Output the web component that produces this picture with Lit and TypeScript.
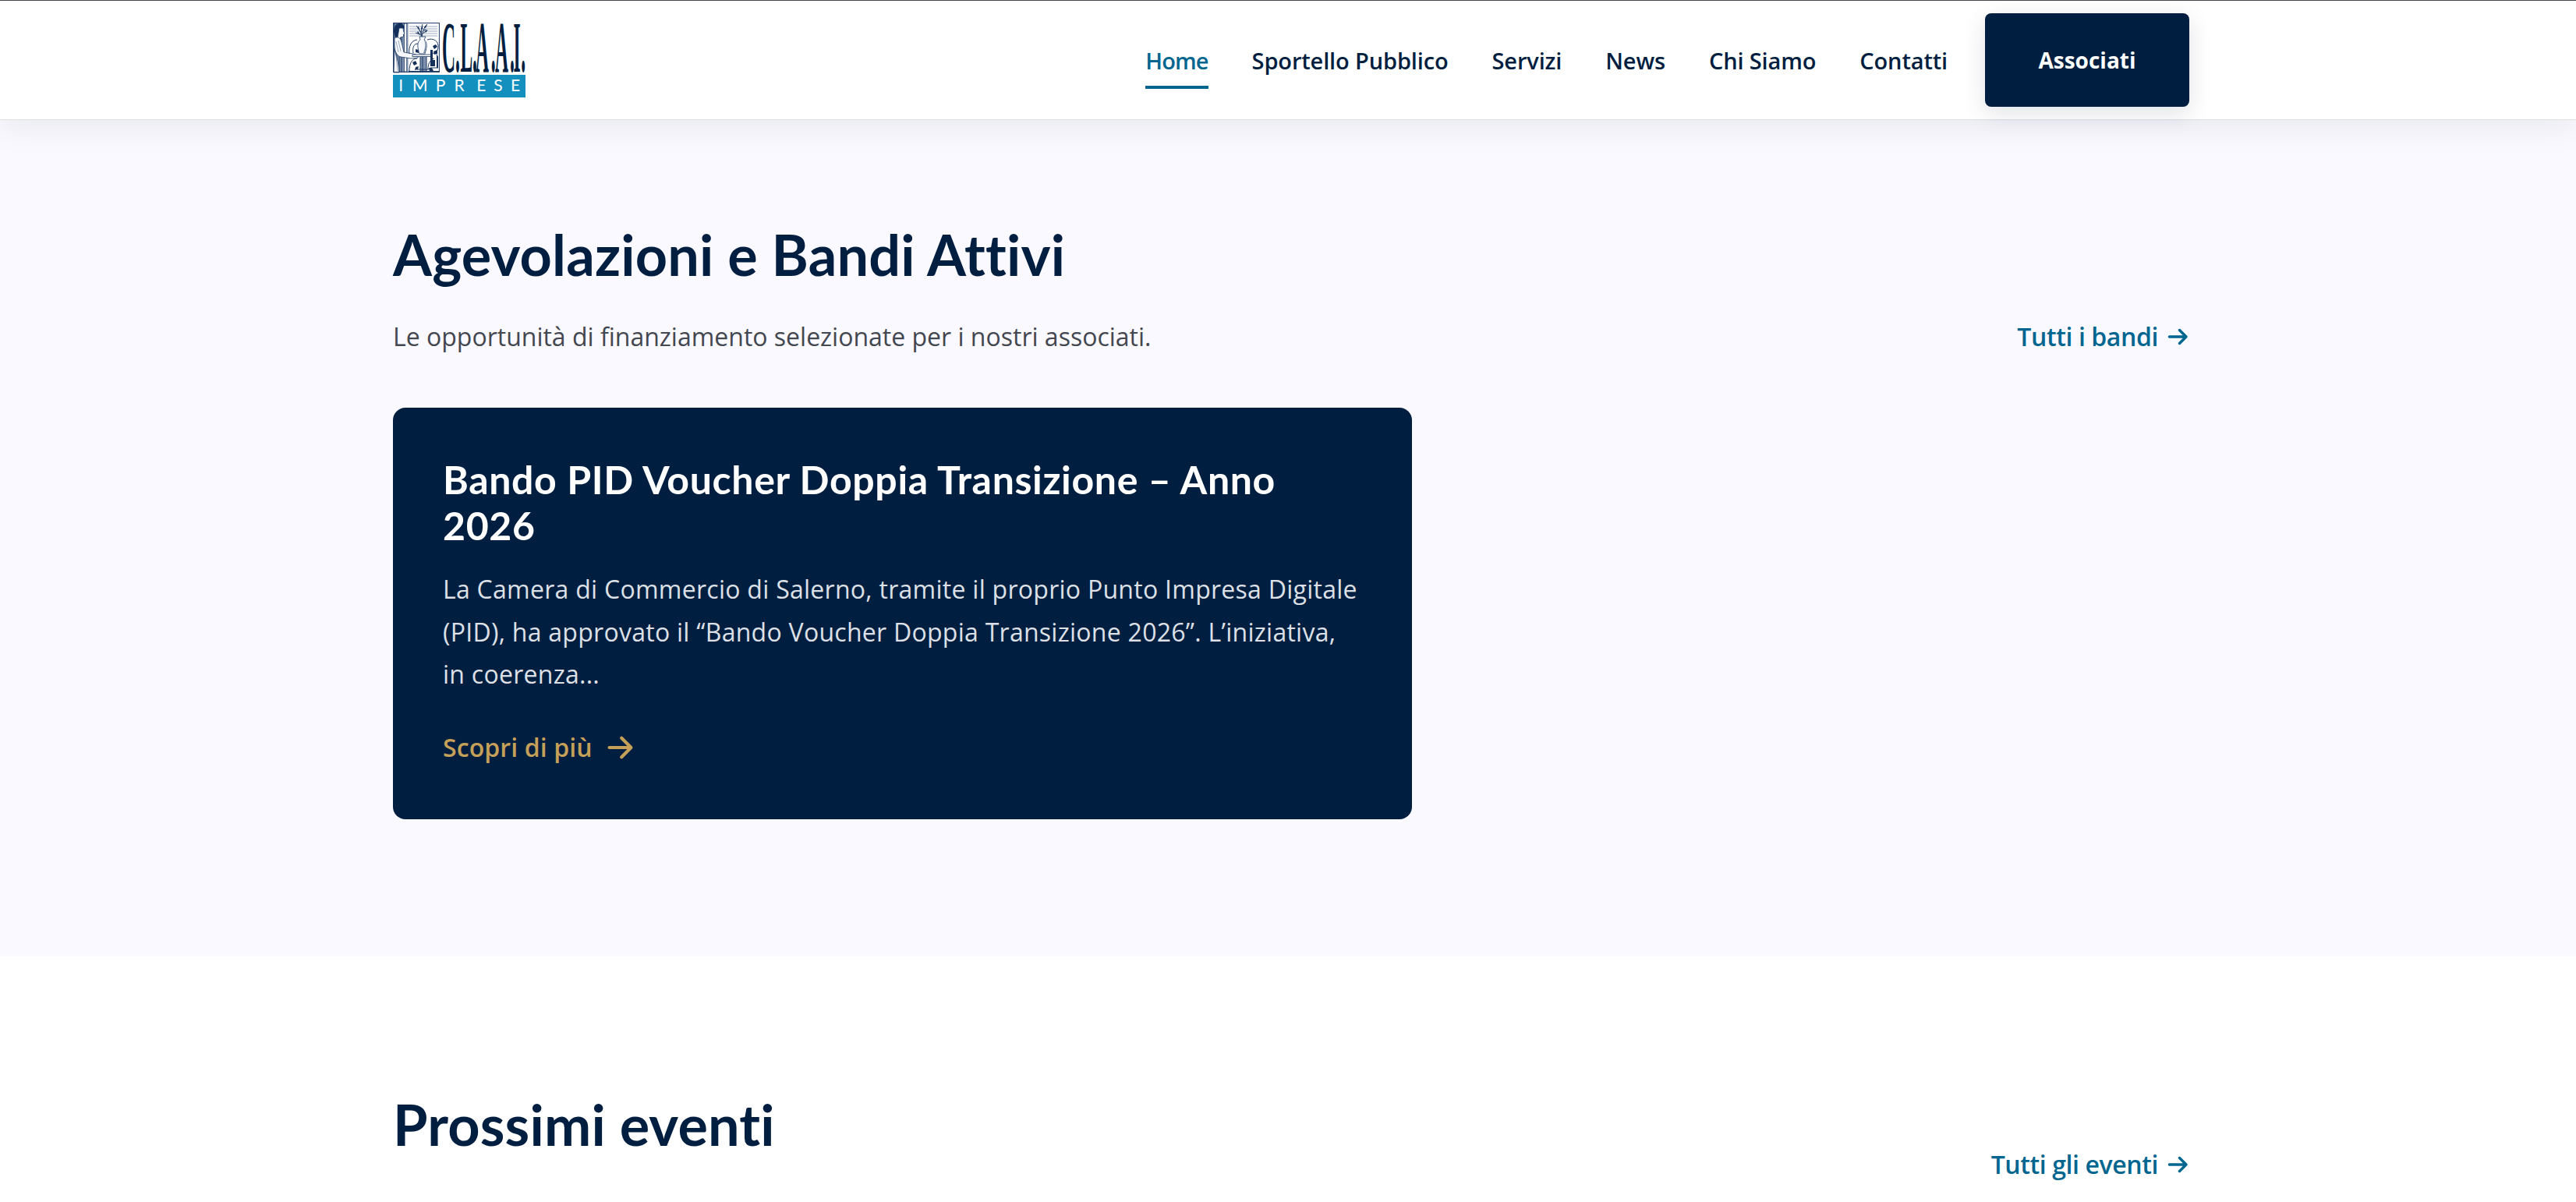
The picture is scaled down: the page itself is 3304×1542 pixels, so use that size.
import {LitElement, html, css, svg, nothing} from 'lit';
import {customElement, property} from 'lit/decorators.js';

interface NavItem {
  label: string;
  active?: boolean;
}

const NAV: NavItem[] = [
  {label: 'Home', active: true},
  {label: 'Sportello Pubblico'},
  {label: 'Servizi'},
  {label: 'News'},
  {label: 'Chi Siamo'},
  {label: 'Contatti'},
];

/** Right-pointing arrow used next to text links. */
@customElement('arrow-icon')
export class ArrowIcon extends LitElement {
  @property({type: Boolean, reflect: true}) large = false;

  static styles = css`
    :host { display: inline-flex; flex-shrink: 0; }
    path { fill: none; stroke: currentColor; stroke-width: 3.4; stroke-linecap: round; stroke-linejoin: round; }
    :host([large]) path { stroke-width: 4.2; }
  `;

  render() {
    return this.large
      ? html`
        <svg width="34" height="34" viewBox="0 0 34 34" aria-hidden="true">
          <path d="M2.6 17H30.4M18.2 4.8L30.4 17L18.2 29.2"></path>
        </svg>`
      : html`
        <svg width="28" height="28" viewBox="0 0 28 28" aria-hidden="true">
          <path d="M2.4 14H24M15.5 5.5L24 14L15.5 22.5"></path>
        </svg>`;
  }
}

@customElement('claai-logo')
export class ClaaiLogo extends LitElement {
  static styles = css`
    :host { display: block; width: 170px; height: 96px; }
    svg { display: block; overflow: visible; }
    .ink { fill: none; stroke: #1f3a63; stroke-width: 1; }
    .thin { fill: none; stroke: #7388a6; stroke-width: .7; }
    .dark { fill: #14305a; }
    .mid { fill: #7d90ad; }
    .paper { fill: #f6f8fb; stroke: #1f3a63; stroke-width: .8; }
    .name { font: 700 94px "Liberation Serif", serif; fill: #001e40; }
    .sub { font: 400 21px Lato, sans-serif; fill: #fff; }
  `;

  /** Woodcut of a woman at the potter's wheel. */
  private _engraving() {
    const rows = [5, 8, 11, 14, 17];
    const hatch = [2, 5, 8, 11];
    return svg`
      <rect fill="#fff" x="0" y="0" width="60" height="64"></rect>
      <rect class="mid" x="0" y="0" width="14" height="64"></rect>
      ${hatch.map((x) => svg`<path class="ink" d="M${x} 0V64"></path>`)}
      ${rows.map((y) => svg`<path class="thin" d="M21 ${y}H57"></path>`)}
      <rect class="paper" x="14.5" y="1" width="3" height="62"></rect>
      <rect class="mid" x="17.5" y="1" width="2" height="62"></rect>
      <path class="dark" d="M1 12C1 5 4 1 9 1c4 0 6 3 5 7l-4 2-2 8-4 3z"></path>
      <path class="paper" d="M8 7l5 0 .5 4 1.5 3-1.5 1v3l-4 1 0 4-4-1z"></path>
      <path class="paper" d="M2 20c4-3 8 0 9 5l3 13 12 2 7 2-1 3-9 1-13-2c-5-1-8-8-8-14z"></path>
      <path class="paper" d="M2 34c2 10 5 14 6 30H1z"></path>
      <path class="thin" d="M4 24l3 14M7 23l3 14M4 42l2 20"></path>
      <path class="ink" d="M21 40c-1-9 2-17 10-18M26 39c-1 -6 0-12 6-12M44 22c8-3 15 2 14 10-1 6-5 8-10 8"></path>
      <path class="ink" d="M21 62c0-9 3-16 10-16M45 60c0-7 2-12 8-14"></path>
      <path class="dark" d="M51 30l4-2 2 3-4 3zM52 37l5-2 0 5-4 1zM25 51l4-2 2 4-4 2zM29 57l4-1-1 4-4 1zM46 58l4 0 2 4-5 0zM29 34l4 1 0 4-4-1z"></path>
      <path class="ink" d="M37 19C36 12 33 7 30 4M37 19C38 11 40 6 44 2M37 17C36 10 37 5 38 2M36 16l-7-3M38 14l6-4M36 12l-4-5M39 10l4-1"></path>
      <path class="dark" d="M31 6l3 3-1-4zM40 6l4-4-2 5zM31 13l4 2-3-4zM41 11l4-2-3 4zM36 8l2-5 0 6z"></path>
      <path class="paper" d="M34 18h8l-2 4c4 3 4 9 1 18h-7c-3-9-3-15 1-18z"></path>
      <path class="mid" d="M39 22c3 3 3 9 0 17h2c3-9 2-14-2-17z"></path>
      <rect class="paper" x="25" y="41" width="25" height="2.5"></rect>
      <rect class="mid" x="35" y="44" width="8" height="19"></rect>
      <path class="ink" d="M35 44v20M38 44v20M43 44v20M31 60h16"></path>
      <path class="dark" d="M48 35h3v13h3v8h-6zM56 40l2 4v14h-2z"></path>
      <path class="ink" d="M20 62.5H60M48 58h10"></path>
      <rect class="ink" x=".6" y=".6" width="58.8" height="62.8"></rect>
    `;
  }

  render() {
    return html`
      <svg width="170" height="96" viewBox="0 0 170 96" role="img" aria-label="C.L.A.A.I. Imprese">
        ${this._engraving()}
        <text class="name" transform="scale(.25 1)" y="62.5" x="252 320 346 408 424 503 524 600 618 657">C.L.A.A.I.</text>
        <rect x="0" y="67" width="170" height="29" fill="#1490bf"></rect>
        <text class="sub" y="88" x="7.3 24.9 54.8 78.4 107.2 129.2 151">IMPRESE</text>
      </svg>
    `;
  }
}

@customElement('app-root')
export class AppRoot extends LitElement {
  static styles = css`
    :host {
      display: block;
      height: 1542px;
      overflow: hidden;
      background: #fff;
      color: #001e40;
      font-family: "Open Sans", "Noto Sans", sans-serif;
      font-size: 32px;
    }

    * { box-sizing: border-box; }

    a { color: inherit; text-decoration: none; white-space: nowrap; }

    .wrap { padding: 0 496px 0 504px; }

    header {
      position: relative;   /* keeps the shadow above the first section */
      height: 154px;
      background: #fff;
      border-top: 1px solid #46464c;
      border-bottom: 1px solid #dedee4;
      box-shadow: 0 8px 40px rgba(0, 20, 50, .08);
    }

    .bar {
      display: flex;
      align-items: center;
      justify-content: space-between;
      height: 152px;
    }

    .menu { display: flex; align-items: center; }

    nav { display: flex; gap: 56px; margin-right: 48px; }

    nav a {
      padding: 16px 0 11px;
      border-bottom: 4px solid transparent;
      font-size: 29px;
      font-weight: 600;
      line-height: 42px;
      letter-spacing: -.14px;
    }

    nav a.active { color: #006690; border-color: #006690; letter-spacing: -.9px; }

    .cta {
      display: flex;
      align-items: center;
      justify-content: center;
      width: 262px;
      height: 120px;
      border-radius: 8px;
      background: #001e40;
      color: #fff;
      font-size: 28px;
      font-weight: 700;
      box-shadow: 0 8px 30px rgba(0, 20, 50, .12);
    }

    section.tinted { background: #faf9ff; padding: 132px 0 176px; }
    section.events { padding-top: 175px; }

    .head { display: flex; align-items: flex-end; justify-content: space-between; }

    h2, h3, p { margin: 0; }

    h2 {
      margin-bottom: 39px;
      font: 700 72px/80px Lato, "Open Sans", sans-serif;
      letter-spacing: .2px;
    }

    .lead { line-height: 54px; color: #43474f; }

    .more {
      display: flex;
      align-items: center;
      gap: 12px;
      line-height: 54px;
      font-weight: 600;
      letter-spacing: -.4px;
      color: #006690;
    }

    .card {
      width: 1307px;
      height: 528px;
      margin-top: 64px;
      padding: 63px 64px;
      border-radius: 16px;
      background: #001e40;
      color: #fff;
    }

    h3 {
      font: 700 50px/59px Lato, "Open Sans", sans-serif;
      letter-spacing: .65px;
    }

    .card p {
      margin: 25px 0 39px;
      line-height: 54.6px;
      letter-spacing: .27px;
      color: #dde0e6;
      white-space: nowrap;
    }

    .card .more { gap: 19px; letter-spacing: .1px; color: #c5a059; }
  `;

  private _more(label: string, large = false) {
    return html`<a class="more" href="#">${label}<arrow-icon ?large=${large}></arrow-icon></a>`;
  }

  render() {
    return html`
      <header>
        <div class="wrap bar">
          <claai-logo></claai-logo>
          <div class="menu">
            <nav>
              ${NAV.map((item) => html`
                <a href="#" class=${item.active ? 'active' : nothing}>${item.label}</a>
              `)}
            </nav>
            <a class="cta" href="#">Associati</a>
          </div>
        </div>
      </header>

      <section class="tinted">
        <div class="wrap">
          <div class="head">
            <div>
              <h2>Agevolazioni e Bandi Attivi</h2>
              <p class="lead">Le opportunità di finanziamento selezionate per i nostri associati.</p>
            </div>
            ${this._more('Tutti i bandi')}
          </div>
          <article class="card">
            <h3>Bando PID Voucher Doppia Transizione – Anno<br>2026</h3>
            <p>
              La Camera di Commercio di Salerno, tramite il proprio Punto Impresa Digitale<br>
              (PID), ha approvato il “Bando Voucher Doppia Transizione 2026”. L’iniziativa,<br>
              in coerenza...
            </p>
            ${this._more('Scopri di più', true)}
          </article>
        </div>
      </section>

      <section class="events">
        <div class="wrap">
          <div class="head">
            <h2>Prossimi eventi</h2>
            ${this._more('Tutti gli eventi')}
          </div>
        </div>
      </section>
    `;
  }
}
